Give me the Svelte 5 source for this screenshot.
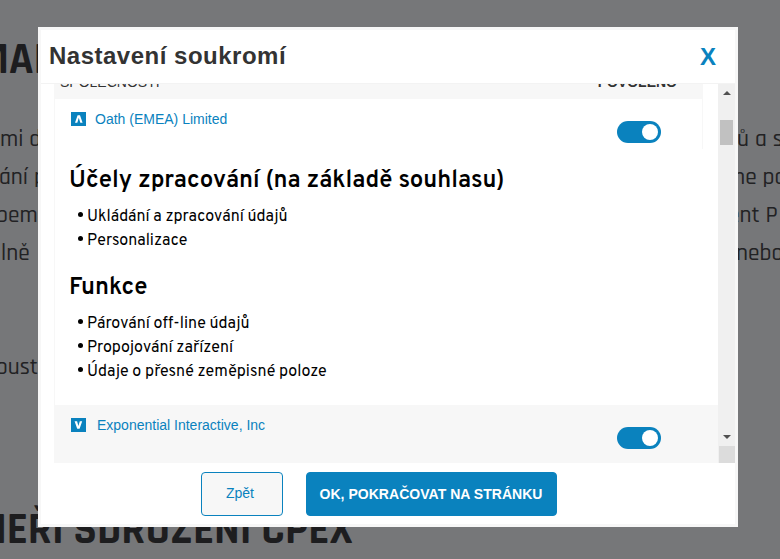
<script>
  const lines = [
    { left: 'mi d', right: 'ů a s', lx: 0, rx: -1 },
    { left: 'ání p', right: 'me po', lx: -1, rx: -11 },
    { left: 'bem', right: 'ent P', lx: -4, rx: -10 },
    { left: 'lně', right: 'nebo', lx: 1, rx: -2 },
    { left: '', right: '', lx: 0, rx: 0 },
    { left: '', right: '', lx: 0, rx: 0 },
    { left: 'oust', right: '', lx: -4, rx: 0 }
  ];
  const sections = [
    { title: 'Účely zpracování (na základě souhlasu)', items: ['Ukládání a zpracování údajů', 'Personalizace'] },
    { title: 'Funkce', items: ['Párování off-line údajů', 'Propojování zařízení', 'Údaje o přesné zeměpisné poloze'] }
  ];
</script>

{#snippet toggle()}
  <span class="toggle"><span class="knob"></span></span>
{/snippet}

<div class="page">
  <div class="backdrop">
    <div class="heading top"><span>MAI</span></div>
    <div class="copy">
      {#each lines as l}
        <div class="line">
          <div class="frag"><span style="margin-left:{l.lx}px">{l.left}</span></div>
          <div class="frag"><span style="margin-left:{l.rx}px">{l.right}</span></div>
        </div>
      {/each}
    </div>
    <div class="heading bottom"><span>NEŘÍ SDRUŽENÍ CPEX</span></div>
  </div>

  <div class="modal">
    <header>
      <h1>Nastavení soukromí</h1>
      <span class="close">X</span>
    </header>
    <div class="body">
      <div class="content">
        <div class="thead"><span class="c1">SPOLEČNOSTI</span><span class="c2">POVOLENO</span></div>
        <div class="row">
          <svg class="box" viewBox="0 0 15 14"><rect width="15" height="14" fill="#0a82be" /><path d="M4 10.7 6.6 3.3H9L11.6 10.7H9.3L7.8 5.8 6.3 10.7Z" fill="#fff" /></svg>
          <span class="name">Oath (EMEA) Limited</span>
          {@render toggle()}
        </div>
        <div class="details">
          {#each sections as s}
            <h2><span>{s.title}</span></h2>
            <ul>
              {#each s.items as item}<li><i></i><span>{item}</span></li>{/each}
            </ul>
          {/each}
        </div>
        <div class="row alt">
          <svg class="box" viewBox="0 0 15 14"><rect width="15" height="14" fill="#0a82be" /><path d="M3.6 3.3H6.1L7.4 8.1 8.8 3.3H11.2L8.6 10.7H6.2Z" fill="#fff" /></svg>
          <span class="name">Exponential Interactive, Inc</span>
          {@render toggle()}
        </div>
      </div>
      <div class="scroll">
        <svg class="up" viewBox="0 0 8 4"><path d="M0 4 4 0 8 4Z" fill="#505050" /></svg>
        <div class="thumb"></div>
        <svg class="down" viewBox="0 0 8 4"><path d="M0 0 4 4 8 0Z" fill="#505050" /></svg>
        <div class="corner"></div>
      </div>
    </div>
    <footer>
      <button class="back">Zpět</button>
      <button class="ok">OK, POKRAČOVAT NA STRÁNKU</button>
    </footer>
  </div>
</div>

<style>
  .page { position: relative; width: 780px; height: 559px; overflow: hidden; background: #767779; font-family: "Liberation Sans", Arial, sans-serif; }
  .page * { box-sizing: border-box; }
  .backdrop { height: 559px; display: flex; flex-direction: column; color: #222224; white-space: nowrap; overflow: hidden; font-family: Rajdhani, Roboto, sans-serif; }
  .heading { font-size: 44px; line-height: 40px; height: 40px; font-weight: 700; color: #1d1d1f; }
  .heading span { display: inline-block; }
  .top { margin-top: 40px; }
  .top span { margin-left: -23px; }
  .copy { margin-top: 40px; }
  .line { display: flex; justify-content: space-between; height: 38px; line-height: 38px; font-size: 23.4px; }
  .frag { width: 42px; }
  .frag span { display: inline-block; font-weight: 500; }
  .bottom { margin-top: 124px; }
  .bottom span { margin-left: -19px; }

  .modal { position: absolute; left: 38px; top: 27px; width: 700px; height: 500px; border: 3px solid #f7f7f7; background: #fff; display: flex; flex-direction: column; }
  header { height: 54px; flex: none; display: flex; justify-content: space-between; padding: 0 19px 0 8px; border-bottom: 1px solid #f3f3f3; line-height: 53px; }
  h1 { margin: 0; line-height: 51px; font-size: 24px; font-weight: 700; color: #333; letter-spacing: 0.5px; }
  .close { font-size: 24px; font-weight: 700; color: #0a82be; }
  .body { height: 379px; flex: none; display: flex; padding-left: 13px; }
  .content { width: 664px; border-left: 1px solid #f7f7f7; overflow: hidden; }
  .thead { width: 648px; height: 15px; overflow: hidden; background: #f7f7f7; display: flex; justify-content: space-between; padding: 0 26px 0 5px; font-size: 14px; color: #333; }
  .thead span { line-height: 15px; margin-top: -9px; }
  .c2 { font-weight: 700; }
  .row { width: 648px; height: 50px; display: flex; padding-left: 16px; border-right: 1px solid #f7f7f7; color: #0a82be; font-size: 14px; }
  .box { width: 15px; height: 14px; margin-top: 13px; flex: none; }
  .name { margin: 11px 0 0 9px; line-height: 18px; flex: 1; }
  .toggle { width: 44px; height: 22px; margin: 22px 41px 0 0; border-radius: 11px; background: #0a82be; display: flex; justify-content: flex-end; align-items: center; padding-right: 3px; }
  .knob { width: 16px; height: 16px; border-radius: 50%; background: #fff; }
  .alt { width: 663px; height: 58px; background: #f7f7f7; }
  .alt .name { margin-left: 11px; }
  .alt .toggle { margin-right: 56px; }
  .details { height: 256px; padding: 17px 0 0 14px; color: #000; font-family: Overpass, Roboto, sans-serif; white-space: nowrap; }
  h2 { margin: 0; height: 30px; line-height: 30px; font-size: 24px; font-weight: 600; }
  ul { list-style: none; margin: 9px 0 20px; padding: 0; }
  li { height: 24px; line-height: 24px; display: flex; align-items: center; padding-left: 9px; font-size: 16px; }
  li i { width: 5px; height: 5px; border-radius: 50%; background: #000; margin: -5px 4px 0 0; }
  .scroll { width: 17px; background: #f0f0f0; display: flex; flex-direction: column; align-items: center; height: 379px; }
  .up { width: 8px; height: 4px; margin-top: 7px; }
  .thumb { width: 13px; height: 25px; margin-top: 25px; background: #c1c1c1; }
  .down { width: 8px; height: 4px; margin-top: auto; }
  .corner { width: 16px; height: 17px; margin-top: 7px; background: #dcdcdc; }
  footer { display: flex; padding: 9px 0 0 160px; gap: 23px; }
  button { height: 44px; padding: 0; border-radius: 4px; border: 1px solid #0a82be; font-family: inherit; font-size: 14px; color: #0a82be; background: #f7f7f7; white-space: nowrap; }
  .back { width: 82px; padding: 0 4px 2px 0; }
  .ok { width: 251px; padding-right: 1px; letter-spacing: 0.03px; background: #0a82be; color: #fff; font-weight: 700; }
</style>
